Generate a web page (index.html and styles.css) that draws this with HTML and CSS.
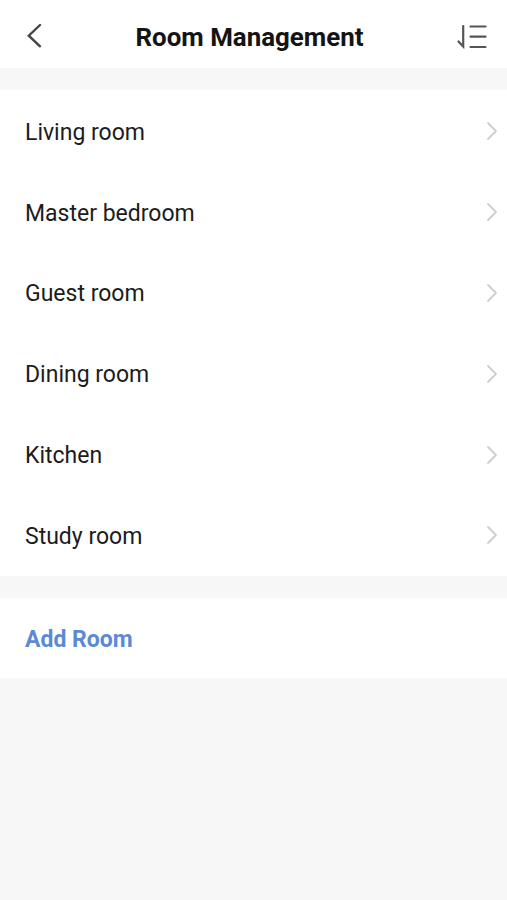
FILE: index.html
```html
<!DOCTYPE html>
<html lang="en">
<head>
    <meta charset="UTF-8">
    <meta name="viewport" content="width=device-width, initial-scale=1.0">
    <title>Room Management</title>
    <link rel="stylesheet" href="styles.css">
</head>
<body>
    <div class="header">
        <svg class="back" viewBox="0 0 16 26"><path d="M14 2L2.800 12.700L14 23.300"/></svg>
        <h1>Room Management</h1>
        <svg class="sort" viewBox="0 0 30 26"><path d="M6.200 3v20.500L1.500 18.500M13.500 3.500h15M13.500 13.700h15M13.500 24h15"/></svg>
    </div>
    <ul class="room-list">
        <li><span>Living room</span><svg class="arrow" viewBox="0 0 12 18"><path d="M2 1l8 8-8 8"/></svg></li>
        <li><span>Master bedroom</span><svg class="arrow" viewBox="0 0 12 18"><path d="M2 1l8 8-8 8"/></svg></li>
        <li><span>Guest room</span><svg class="arrow" viewBox="0 0 12 18"><path d="M2 1l8 8-8 8"/></svg></li>
        <li><span>Dining room</span><svg class="arrow" viewBox="0 0 12 18"><path d="M2 1l8 8-8 8"/></svg></li>
        <li><span>Kitchen</span><svg class="arrow" viewBox="0 0 12 18"><path d="M2 1l8 8-8 8"/></svg></li>
        <li><span>Study room</span><svg class="arrow" viewBox="0 0 12 18"><path d="M2 1l8 8-8 8"/></svg></li>
    </ul>
    <div class="add-room">Add Room</div>
</body>
</html>
```
FILE: styles.css
```css
body {
    font-family: Roboto, sans-serif;
    background-color: #f7f7f7;
    color: #1c1c1c;
    margin: 0;
}
svg {
    fill: none;
    flex-shrink: 0;
    stroke-linecap: round;
}
.header {
    box-sizing: border-box;
    height: 68px;
    padding: 4px 20px 0 26px;
    background-color: #fff;
    display: flex;
    justify-content: space-between;
    align-items: center;
}
.header h1 {
    margin: 0;
    padding-top: 1px;
    color: #141414;
    font-size: 25.9px;
    font-weight: 700;
}
.back {
    width: 16px;
    height: 26px;
    stroke: #444;
    stroke-width: 2.4;
}
.sort {
    width: 30px;
    height: 26px;
    stroke: #555;
    stroke-width: 2.2;
}
.room-list {
    list-style-type: none;
    margin: 22px 0;
    padding: 1px 0 0;
    background-color: #fff;
}
.room-list li {
    height: 80.8px;
    padding: 0 9px 0 25px;
    display: flex;
    align-items: center;
    justify-content: space-between;
    font-size: 23px;
}
.room-list span {
    padding-top: 2px;
}
.arrow {
    width: 12px;
    height: 18px;
    stroke: #cecece;
    stroke-width: 1.8;
}
.add-room {
    height: 80px;
    line-height: 83px;
    padding-left: 25px;
    background-color: #fff;
    color: #5b8ad5;
    font-size: 23px;
    font-weight: 700;
}
```
